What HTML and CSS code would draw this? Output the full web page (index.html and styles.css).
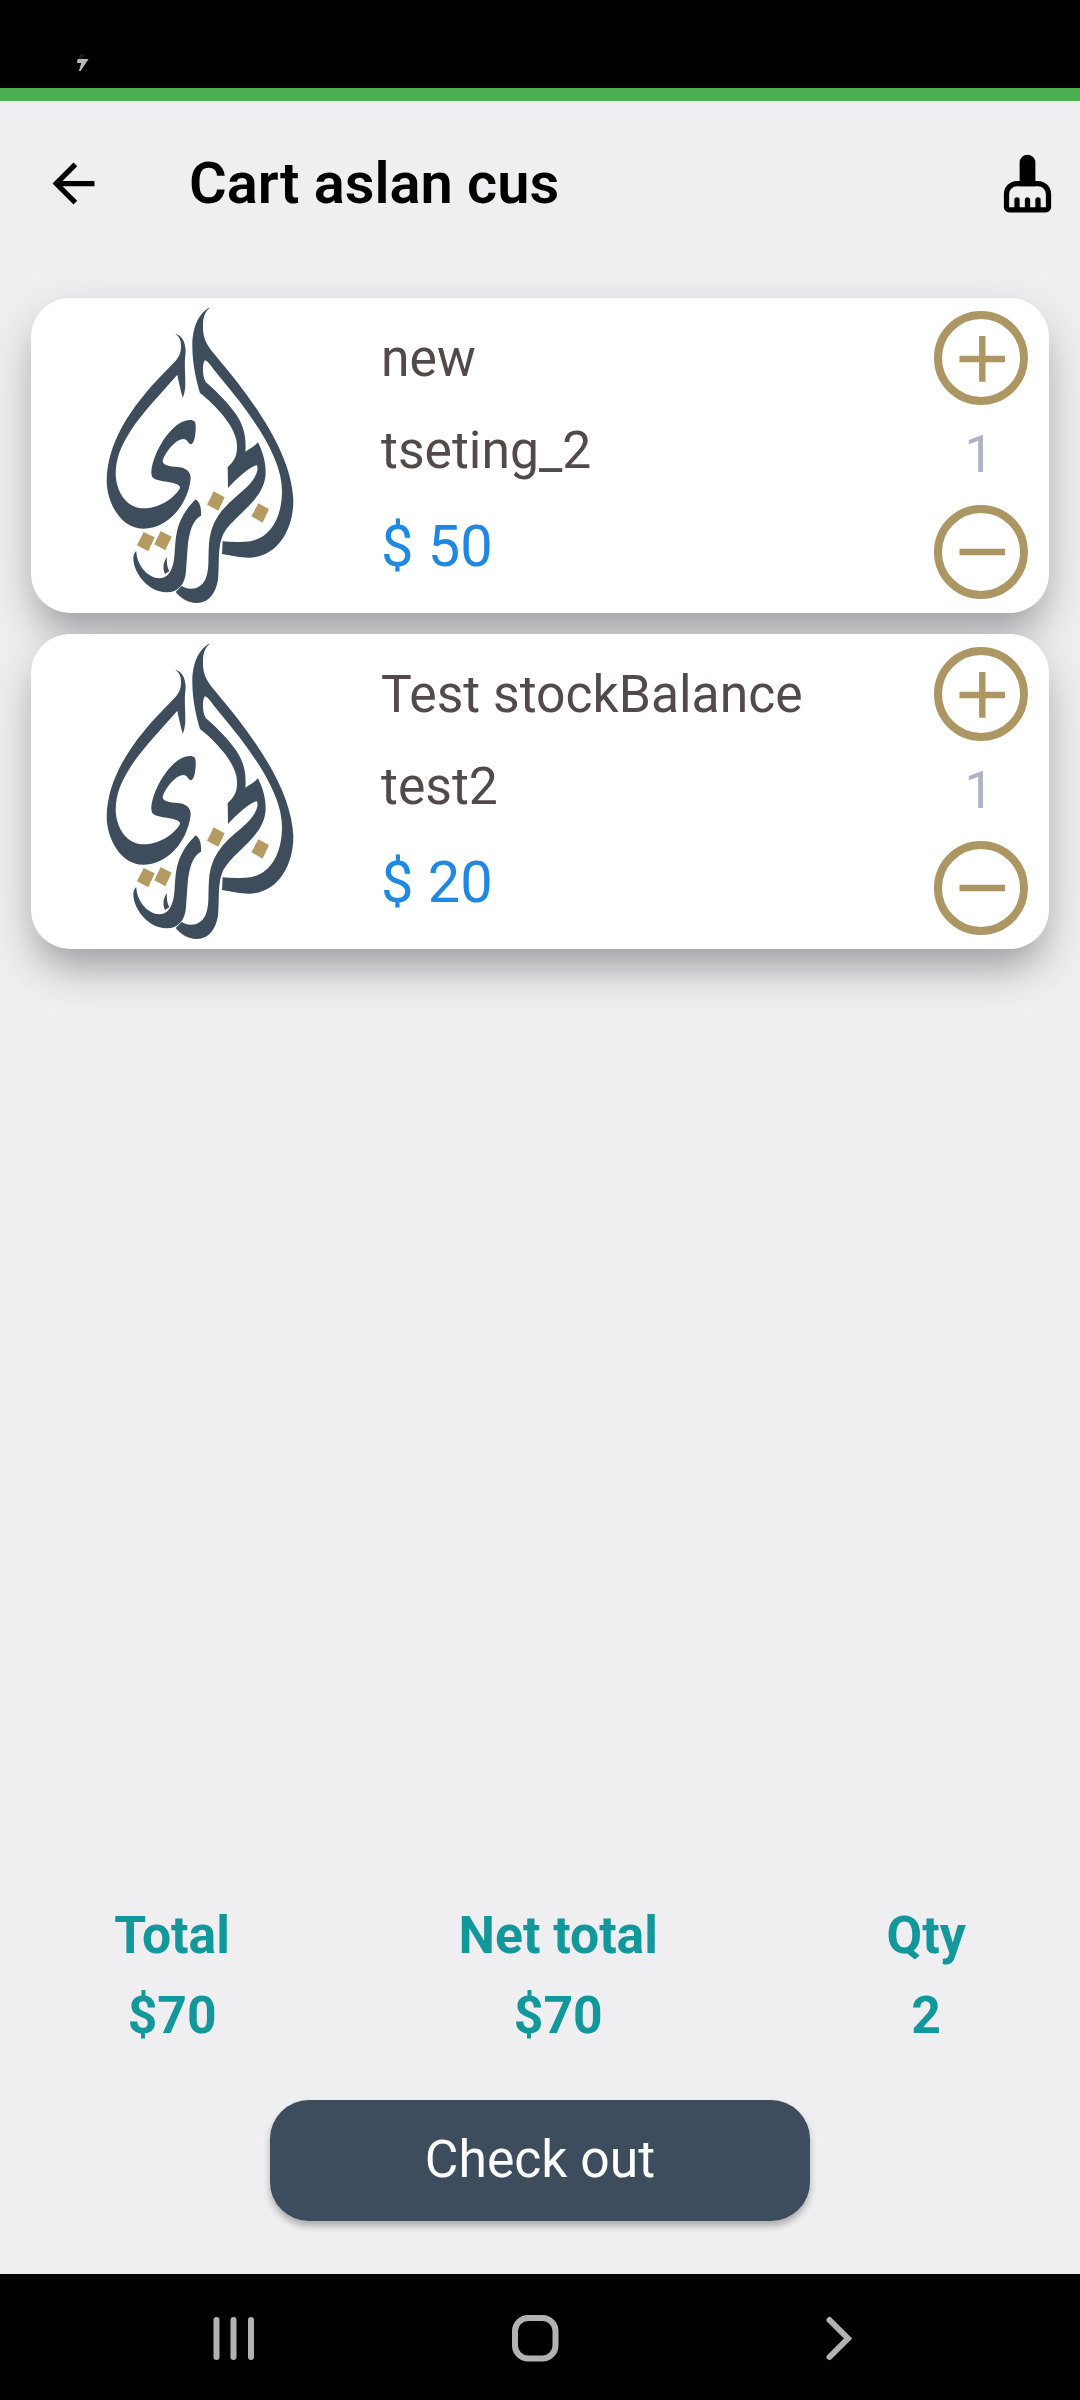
FILE: index.html
```html
<!DOCTYPE html>
<html lang="en">
<head>
<meta charset="utf-8">
<title>Cart</title>
<link rel="stylesheet" href="styles.css">
</head>
<body>
<svg class="defs" width="0" height="0" aria-hidden="true">
  <symbol id="logo" viewBox="300 240 600 910">
    <g fill="#3d4d5c">
      <path d="M523 328C545 334 557 352 557 385C552 420 556 445 556 480C556 498 552 512 548 522C543 500 537 480 532 452C480 512 430 562 392 620C362 666 347 705 347 750C349 812 386 853 430 853C480 853 528 818 540 791C540 775 504 776 470 767C458 764 454 758 454 745C456 690 515 588 570 588C586 588 588 596 587 615C586 645 580 660 572 661C564 659 563 645 550 645C525 645 490 693 488 713C492 727 520 727 540 730C562 734 573 746 572 765C562 848 500 914 430 914C360 914 320 832 320 770C322 640 412 525 515 423C538 400 543 388 543 365C543 345 534 333 523 328Z"/>
      <path d="M630 250C604 262 577 300 577 365C577 420 589 470 600 507C640 538 711 608 711 665C712 698 702 711 683 730L684 792C710 762 752 727 770 723C781 742 756 775 740 790C696 832 634 866 627 960C624 1000 628 1030 620 1055C613 1080 596 1094 573 1094C560 1094 551 1090 545 1086L527 1104C542 1122 562 1137 590 1137C638 1137 655 1086 655 1050C658 1010 653 965 670 930C702 872 797 828 797 745C797 710 786 680 774 655C762 668 748 675 736 683C740 640 731 598 700 560C670 522 643 497 618 475C606 460 607 414 615 409C623 408 638 434 660 460C770 590 846 706 846 800C846 895 800 952 735 953C710 955 690 954 668 952L666 990C700 995 720 1001 745 1001C830 1001 880 920 880 830C876 686 755 523 655 405C624 368 609 350 609 310C608 280 615 264 630 250Z"/>
      <path d="M587 826C600 835 604 850 603 875C577 887 566 930 563 970L558 1040C556 1080 535 1105 500 1105C440 1105 400 1040 400 1005C400 990 405 984 409 982C410 1025 445 1063 478 1063C512 1063 522 1025 524 985C528 935 527 885 587 826Z"/>
      <path d="M500 1000C489 1016 488 1036 495 1050L508 1041C500 1028 501 1012 500 1000Z"/>
    </g>
    <g fill="#b59b62">
      <path d="M641 802L674 820L655 860L621 842Z"/>
      <path d="M775 838L807 855L788 896L754 877Z"/>
      <path d="M431 924L464 940L445 982L411 964Z"/>
      <path d="M482 921L515 938L496 979L463 961Z"/>
    </g>
  </symbol>
  <symbol id="plus" viewBox="0 0 94 94">
    <circle cx="47" cy="47" r="43" fill="none" stroke="#ac9664" stroke-width="8"/>
    <path d="M25.5 48H71M48.3 25V70.8" fill="none" stroke="#ac9664" stroke-width="6.4"/>
  </symbol>
  <symbol id="minus" viewBox="0 0 94 94">
    <circle cx="47" cy="47" r="43" fill="none" stroke="#ac9664" stroke-width="8"/>
    <path d="M25.5 47H71" fill="none" stroke="#ac9664" stroke-width="6.6"/>
  </symbol>
</svg>
<div class="screen">
  <div class="status">
    <svg class="bolt" viewBox="0 0 12 18"><path d="M3 0H8L6 5H1Z" fill="#171717"/><path d="M.6 5H11.6L3.6 17H1.9L4.3 9H0Z" fill="#b9b9b9"/></svg>
  </div>
  <header class="appbar">
    <svg class="icon" viewBox="0 0 24 24"><path d="M20 11H7.83l5.59-5.59L12 4l-8 8 8 8 1.41-1.41L7.83 13H20v-2z"/></svg>
    <h1 class="title">Cart aslan cus</h1>
    <svg class="icon" viewBox="0 0 24 24"><path d="M9 13V4a3 3 0 0 1 6 0V13Z"/><path d="M8 12H16A4 4 0 0 1 20 16V21A1 1 0 0 1 19 22H5A1 1 0 0 1 4 21V16A4 4 0 0 1 8 12ZM8 22V18.2M12 22V18.2M16 22V18.2" fill="none" stroke="#000" stroke-width="2" stroke-linecap="round"/></svg>
  </header>
  <main class="list">
    <article class="card">
      <svg class="logo"><use href="#logo"/></svg>
      <div class="info">
        <p class="name">new</p>
        <p class="name">tseting_2</p>
        <p class="price">$ 50</p>
      </div>
      <div class="stepper">
        <svg class="step"><use href="#plus"/></svg>
        <span class="count">1</span>
        <svg class="step"><use href="#minus"/></svg>
      </div>
    </article>
    <article class="card">
      <svg class="logo"><use href="#logo"/></svg>
      <div class="info">
        <p class="name">Test stockBalance</p>
        <p class="name">test2</p>
        <p class="price">$ 20</p>
      </div>
      <div class="stepper">
        <svg class="step"><use href="#plus"/></svg>
        <span class="count">1</span>
        <svg class="step"><use href="#minus"/></svg>
      </div>
    </article>
  </main>
  <section class="totals">
    <div class="total"><span>Total</span><span>$70</span></div>
    <div class="total"><span>Net total</span><span>$70</span></div>
    <div class="total"><span>Qty</span><span>2</span></div>
  </section>
  <button class="checkout">Check out</button>
  <nav class="navbar">
    <svg class="navicons" viewBox="0 0 1080 126" fill="none" stroke="#b2b2b2" stroke-width="6" stroke-linecap="round">
      <path d="M216.5 46V83M233.5 46V83M251 46V83"/>
      <rect x="515" y="44" width="40.5" height="40.5" rx="13"/>
      <path d="M829.5 46L848 64.5L829.5 83"/>
    </svg>
  </nav>
</div>
</body>
</html>
```
FILE: styles.css
```css
* { box-sizing: border-box; }

body {
  margin: 0;
  background: #efeff1;
  font-family: Roboto, "Liberation Sans", sans-serif;
}

.defs { display: block; }

.screen {
  display: flex;
  flex-direction: column;
  width: 1080px;
  height: 2400px;
}

.status {
  height: 101px;
  padding: 54px 0 0 77px;
  background: #000;
  border-bottom: 13px solid #4caf50;
}

.bolt {
  display: block;
  width: 12px;
  height: 18px;
}

.appbar {
  display: flex;
  align-items: center;
  height: 165px;
  padding: 0 21px 0 42px;
}

.icon {
  width: 63px;
  height: 63px;
}

.title {
  flex: 1;
  margin: 0 0 1px 84px;
  font-size: 57.75px;
  font-weight: 600;
  line-height: 68px;
}

.list {
  display: flex;
  flex-direction: column;
  flex: 1;
  gap: 21px;
  padding: 31.5px 31.5px 0 31px;
}

.card {
  display: flex;
  height: 315px;
  padding: 0 21px 0 68.5px;
  border-radius: 39px;
  background: #fff;
  box-shadow: 0 24px 36px -8px rgba(0, 0, 0, .25), 0 18px 54px rgba(0, 0, 0, .13);
}

.logo {
  width: 200px;
  height: 303.3px;
  margin-top: 6px;
}

.info {
  flex: 1;
  padding: 30px 0 0 81.5px;
}

.name,
.price {
  margin: 0;
  font-size: 51.65px;
  line-height: 62px;
  color: #524a48;
}

.name { margin-bottom: 30px; }

.price {
  font-size: 57.75px;
  line-height: 68px;
  color: #2088e0;
}

.stepper {
  display: flex;
  flex-direction: column;
  align-items: center;
  justify-content: space-between;
  padding: 13.5px 0;
}

.step {
  width: 94px;
  height: 94px;
}

.count {
  padding-right: 3px;
  font-size: 51.65px;
  line-height: 62px;
  color: #acb3c8;
}

.totals {
  display: flex;
  justify-content: space-around;
  margin-bottom: 53px;
}

.total {
  display: flex;
  flex-direction: column;
  align-items: center;
  gap: 18px;
  font-size: 51.65px;
  font-weight: 700;
  line-height: 62px;
  color: #12979b;
}

.checkout {
  align-self: center;
  width: 540px;
  height: 121px;
  margin: 0 0 53.5px;
  padding: 0 0 1px;
  border: 0;
  border-radius: 39px;
  background: #3d4d5d;
  box-shadow: 0 5px 7px rgba(0, 0, 0, .28);
  color: #fff;
  font: 400 51.65px/62px Roboto, "Liberation Sans", sans-serif;
}

.navbar {
  height: 126px;
  background: #000;
}

.navicons {
  display: block;
  width: 1080px;
  height: 126px;
}
```
